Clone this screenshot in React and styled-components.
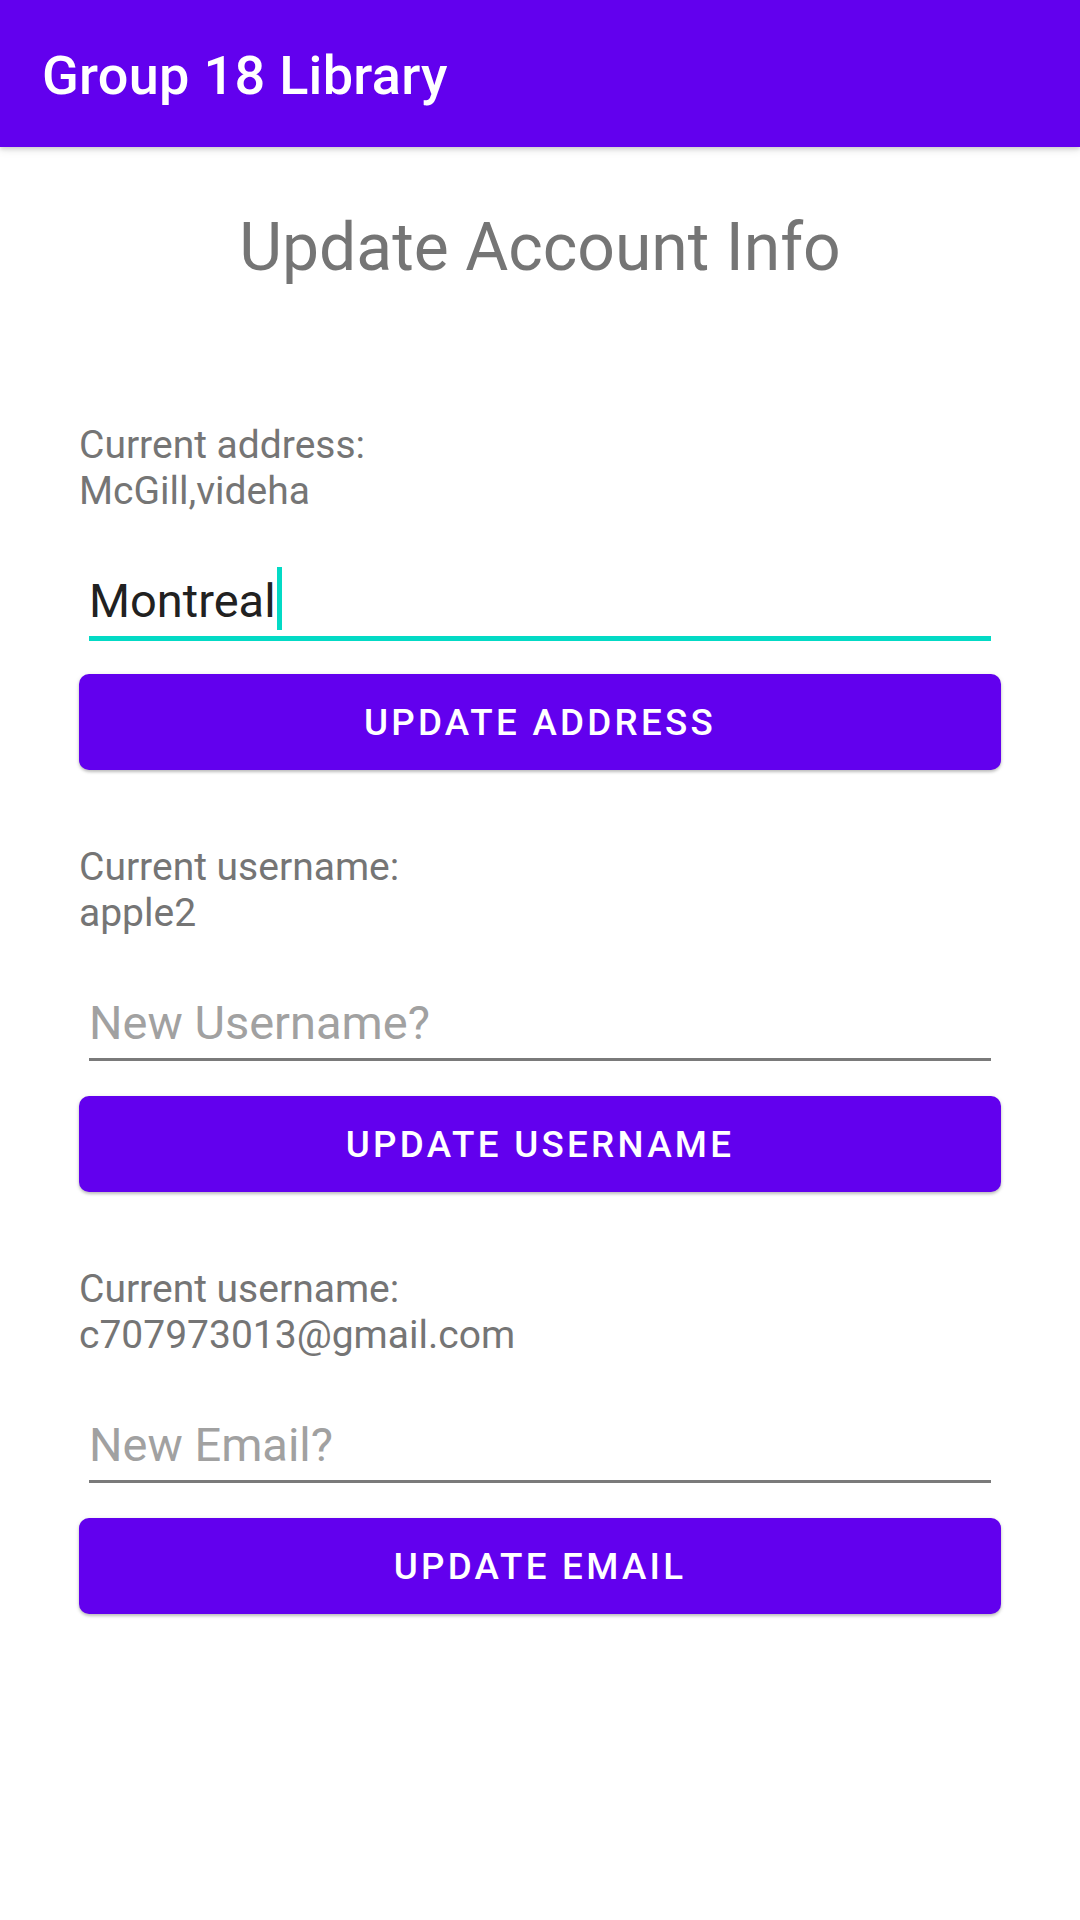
import React from "react";
import styled, { createGlobalStyle } from "styled-components";

const GlobalStyle = createGlobalStyle`
  html, body {
    margin: 0;
    padding: 0;
    background: #ffffff;
  }
  body {
    font-family: Roboto, "Noto Sans", "Liberation Sans", sans-serif;
  }
  * {
    box-sizing: border-box;
  }
`;

const Screen = styled.div`
  width: 1080px;
  min-height: 1920px;
  background: #ffffff;
  display: flex;
  flex-direction: column;
`;

const AppBar = styled.header`
  height: 147px;
  background-color: #6200ee;
  display: flex;
  align-items: center;
  padding: 4px 0 0 42px;
  box-shadow: 0 2px 4px rgba(0, 0, 0, 0.14), 0 4px 8px rgba(0, 0, 0, 0.08);
  position: relative;
  z-index: 1;
`;

const AppTitle = styled.h1`
  margin: 0;
  color: #ffffff;
  font-size: 54px;
  font-weight: 500;
  letter-spacing: 0.3px;
`;

const PageTitle = styled.h2`
  margin: 62px 0 0;
  text-align: center;
  color: #757575;
  font-size: 66px;
  line-height: 77px;
  font-weight: 400;
`;

const Sections = styled.div`
  margin-top: 136px;
  padding: 0 79px;
  display: flex;
  flex-direction: column;
  gap: 74px;
`;

const Section = styled.section`
  display: flex;
  flex-direction: column;
`;

const Info = styled.div`
  color: #757575;
  font-size: 39px;
  line-height: 46px;
`;

const Field = styled.div`
  margin: 53px 10px ${(p) => (p.$focused ? "0" : "2px")};
  height: ${(p) => (p.$focused ? "74px" : "72px")};
  display: flex;
  align-items: flex-start;
  border-bottom: ${(p) => (p.$focused ? "5px solid #03dac5" : "3px solid #7a7a7a")};
`;

const Value = styled.span`
  margin-top: 6px;
  color: #212121;
  font-size: 47px;
  line-height: 55px;
`;

const Caret = styled.span`
  display: inline-block;
  width: 5px;
  height: 63px;
  margin-left: 1px;
  background: #03dac5;
`;

const TextInput = styled.input`
  margin-top: 6px;
  width: 100%;
  height: 55px;
  padding: 0;
  border: none;
  outline: none;
  background: transparent;
  font-family: inherit;
  font-size: 47px;
  line-height: 55px;
  color: #212121;

  &::placeholder {
    color: #a1a1a1;
  }
`;

const ActionButton = styled.button`
  margin-top: 33px;
  height: 96px;
  width: 100%;
  border: none;
  border-radius: 10px;
  background-color: #6200ee;
  color: #ffffff;
  font-family: inherit;
  font-size: 36.75px;
  font-weight: 500;
  letter-spacing: 0.0892em;
  text-transform: uppercase;
  box-shadow: 0 2px 3px rgba(0, 0, 0, 0.2), 0 1px 5px rgba(0, 0, 0, 0.1);
  cursor: pointer;
`;

const sections = [
  {
    label: "Current address:",
    value: "McGill,videha",
    typed: "Montreal",
    placeholder: "New Address?",
    action: "Update Address",
  },
  {
    label: "Current username:",
    value: "apple2",
    placeholder: "New Username?",
    action: "Update Username",
  },
  {
    label: "Current username:",
    value: "c707973013@gmail.com",
    placeholder: "New Email?",
    action: "Update Email",
  },
];

function UpdateSection({ label, value, typed, placeholder, action }) {
  const focused = Boolean(typed);
  return (
    <Section>
      <Info>
        {label}
        <br />
        {value}
      </Info>
      <Field $focused={focused}>
        {focused ? (
          <>
            <Value>{typed}</Value>
            <Caret />
          </>
        ) : (
          <TextInput placeholder={placeholder} />
        )}
      </Field>
      <ActionButton>{action}</ActionButton>
    </Section>
  );
}

export default function App() {
  return (
    <>
      <GlobalStyle />
      <Screen>
        <AppBar>
          <AppTitle>Group 18 Library</AppTitle>
        </AppBar>
        <PageTitle>Update Account Info</PageTitle>
        <Sections>
          {sections.map((s, i) => (
            <UpdateSection key={i} {...s} />
          ))}
        </Sections>
      </Screen>
    </>
  );
}
